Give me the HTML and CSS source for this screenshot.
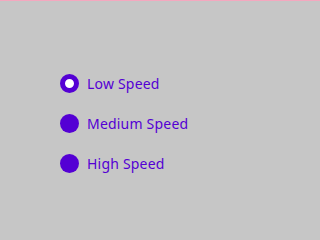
FILE: index.html
```html
<!DOCTYPE html>
<html lang="en">
<head>
  <meta charset="UTF-8">
  <title>Speed</title>
  <link rel="stylesheet" href="styles.css">
</head>
<body>
  <div class="top-line"></div>
  <div class="options">
    <div class="option selected"><span class="dot"></span><span class="label">Low Speed</span></div>
    <div class="option"><span class="dot"></span><span class="label">Medium Speed</span></div>
    <div class="option"><span class="dot"></span><span class="label">High Speed</span></div>
  </div>
</body>
</html>
```

FILE: styles.css
```css
body {
  margin: 0;
  width: 320px;
  height: 240px;
  background: #c6c6c6;
  font-family: "Noto Sans", sans-serif;
  overflow: hidden;
}
.top-line {
  height: 1px;
  background: #f4a8bf;
}
.options {
  display: flex;
  flex-direction: column;
  gap: 20px;
  padding: 72px 0 0 60px;
}
.option {
  display: flex;
  align-items: center;
  height: 20px;
  gap: 8px;
}
.dot {
  width: 19px;
  height: 19px;
  border-radius: 50%;
  background: #5400d4;
  box-sizing: border-box;
}
.selected .dot {
  background: #fff;
  border: 5px solid #5400d4;
}
.label {
  color: #5400d4;
  font-size: 14px;
  letter-spacing: 0.2px;
}
```
